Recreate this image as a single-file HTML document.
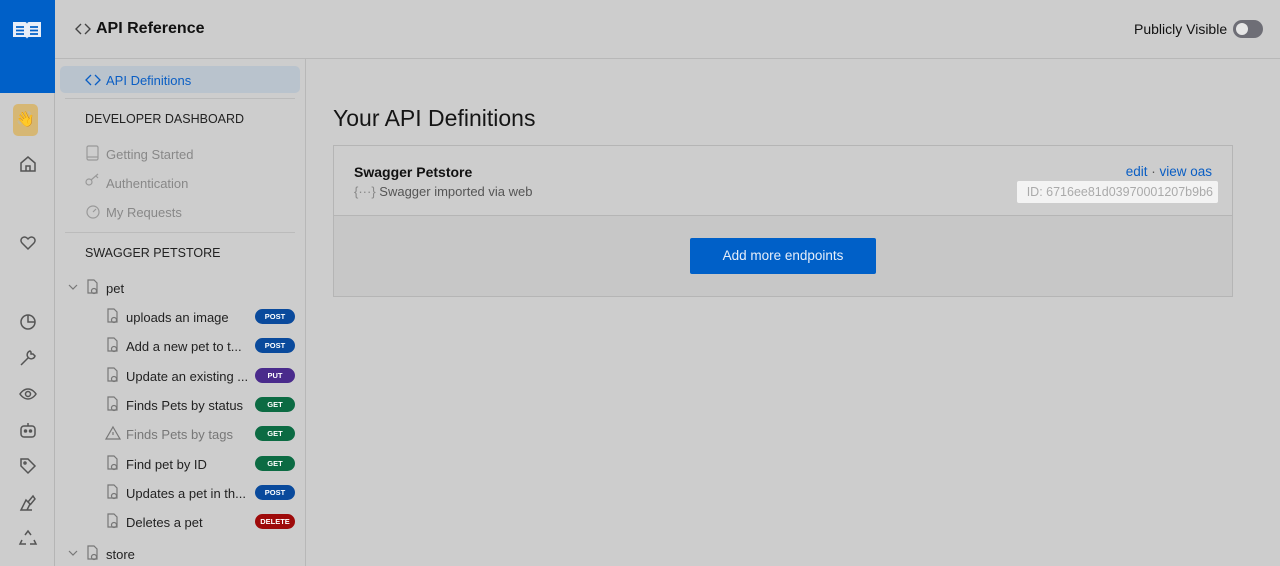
<!DOCTYPE html>
<html><head><meta charset="utf-8"><style>
*{box-sizing:border-box;margin:0;padding:0}
body{width:1280px;height:566px;overflow:hidden;background:#cdcdcd;font-family:"Liberation Sans",sans-serif;color:#1a1a1a;position:relative}
.abs{position:absolute}
.rail{left:0;top:0;width:55px;height:566px;border-right:1px solid #b5b5b5;background:#cdcdcd}
.blue{left:0;top:0;width:55px;height:93px;background:#0060c8}
.hdr{left:55px;top:0;width:1225px;height:59px;border-bottom:1px solid #b8b8b8}
.side{left:55px;top:59px;width:251px;height:507px;border-right:1px solid #b8b8b8}
.sec{position:absolute;left:30px;font-size:12.5px;color:#222}
.item{position:absolute;left:51px;font-size:13px;color:#888}
.ep{position:absolute;left:71px;font-size:13px;color:#222;white-space:nowrap}
.badge{position:absolute;left:200px;width:40px;height:15px;border-radius:8px;color:#fff;font-size:7.5px;font-weight:bold;text-align:center;line-height:15px}
.post{background:#0a4a9c}.put{background:#4a2b8c}.get{background:#0c6b43}.del{background:#9e0a0a}
</style></head><body>
<div class="abs rail"></div>
<div class="abs blue"></div>
<svg class="abs" style="left:12px;top:20px" width="30" height="22" viewBox="0 0 30 22"><path d="M1 2h12c1 0 2 1 2 2 0-1 1-2 2-2h12v15H17c-1 0-2 1-2 2 0-1-1-2-2-2H1z" fill="#e8eef8"/><g stroke="#0060c8" stroke-width="1.8"><path d="M4 7h8M4 10.5h8M4 14h8M18 7h8M18 10.5h8M18 14h8"/></g></svg>
<div class="abs" style="left:13px;top:104px;width:25px;height:32px;background:#d6b774;border-radius:5px;text-align:center;line-height:32px;font-size:15px">👋</div>
<svg class="abs" style="left:18px;top:154px" width="20" height="20" viewBox="0 0 20 20" fill="none" stroke="#555" stroke-width="1.5"><path d="M3 9l7-6 7 6v8H3z M8 17v-5h4v5"/></svg>
<svg class="abs" style="left:18px;top:233px" width="20" height="20" viewBox="0 0 20 20" fill="none" stroke="#555" stroke-width="1.5"><path d="M10 16l-6-6a3.5 3.5 0 015-5l1 1 1-1a3.5 3.5 0 015 5z"/></svg>
<svg class="abs" style="left:18px;top:312px" width="20" height="20" viewBox="0 0 20 20" fill="none" stroke="#555" stroke-width="1.5"><circle cx="10" cy="10" r="7"/><path d="M10 3v7h7"/></svg>
<svg class="abs" style="left:18px;top:348px" width="20" height="20" viewBox="0 0 20 20" fill="none" stroke="#555" stroke-width="1.5"><path d="M3 17l7-7M12 3a4 4 0 105 5l-2-2-2 0 0-2z"/></svg>
<svg class="abs" style="left:18px;top:384px" width="20" height="20" viewBox="0 0 20 20" fill="none" stroke="#555" stroke-width="1.5"><path d="M2 10s3-5 8-5 8 5 8 5-3 5-8 5-8-5-8-5z"/><circle cx="10" cy="10" r="2.5"/></svg>
<svg class="abs" style="left:18px;top:421px" width="20" height="20" viewBox="0 0 20 20" fill="none" stroke="#555" stroke-width="1.5"><rect x="3" y="5" width="14" height="11" rx="3"/><path d="M10 2v3"/><circle cx="7.5" cy="10" r="1" fill="#555"/><circle cx="12.5" cy="10" r="1" fill="#555"/></svg>
<svg class="abs" style="left:18px;top:456px" width="20" height="20" viewBox="0 0 20 20" fill="none" stroke="#555" stroke-width="1.5"><path d="M3 3h7l7 7-7 7-7-7z"/><circle cx="7" cy="7" r="1"/></svg>
<svg class="abs" style="left:18px;top:493px" width="20" height="20" viewBox="0 0 20 20" fill="none" stroke="#555" stroke-width="1.5"><path d="M3 17l5-10 4 4-3 6zM10 9l5-6 2 3-5 6M6 17h8"/></svg>
<svg class="abs" style="left:18px;top:528px" width="20" height="20" viewBox="0 0 20 20" fill="none" stroke="#555" stroke-width="1.5"><path d="M7 7l3-4 3 4M4 12l-2 4h6M16 12l2 4h-6"/></svg>

<div class="abs hdr"></div>
<svg class="abs" style="left:75px;top:22px" width="16" height="14" viewBox="0 0 16 14" fill="none" stroke="#444" stroke-width="1.4"><path d="M6 2L1 7l5 5M10 2l5 5-5 5"/></svg>
<div class="abs" style="left:96px;top:20px;font-size:16px;font-weight:bold;color:#111">API Reference</div>
<div class="abs" style="left:1134px;top:21px;font-size:14px;color:#111">Publicly Visible</div>
<div class="abs" style="left:1233px;top:20px;width:30px;height:18px;border-radius:9px;background:#6e6e76"><div style="position:absolute;left:3px;top:3px;width:12px;height:12px;border-radius:6px;background:#e6e6e6"></div></div>

<div class="abs side">
<div style="position:absolute;left:5px;top:7px;width:240px;height:27px;background:#b9c3cd;border-radius:5px"></div>
<svg style="position:absolute;left:30px;top:15px" width="16" height="12" viewBox="0 0 16 12" fill="none" stroke="#0a5ec4" stroke-width="1.3"><path d="M6 1L1 6l5 5M10 1l5 5-5 5"/></svg>
<div style="position:absolute;left:51px;top:14px;font-size:13px;color:#0a5ec4">API Definitions</div>
<div style="position:absolute;left:10px;top:39px;width:230px;height:1px;background:#bbb"></div>
<div class="sec" style="top:53px">DEVELOPER DASHBOARD</div>
<div class="item" style="top:88px">Getting Started</div>
<div class="item" style="top:117px">Authentication</div>
<div class="item" style="top:146px">My Requests</div>
<svg style="position:absolute;left:30px;top:86px" width="16" height="76" viewBox="0 0 16 76" fill="none" stroke="#999" stroke-width="1.2"><rect x="2" y="1" width="11" height="14" rx="1.5"/><path d="M2 12h11"/><circle cx="4" cy="37" r="3"/><path d="M6 35l7-6M11 31l2 2"/><circle cx="8" cy="67" r="6"/><path d="M8 67l3-3"/></svg>
<div style="position:absolute;left:10px;top:173px;width:230px;height:1px;background:#bbb"></div>
<div class="sec" style="top:187px">SWAGGER PETSTORE</div>
<div class="ep" style="left:51px;top:222px">pet</div>
<div class="ep" style="top:251px">uploads an image</div><div class="badge post" style="top:250px">POST</div>
<div class="ep" style="top:280px">Add a new pet to t...</div><div class="badge post" style="top:279px">POST</div>
<div class="ep" style="top:310px">Update an existing ...</div><div class="badge put" style="top:309px">PUT</div>
<div class="ep" style="top:339px">Finds Pets by status</div><div class="badge get" style="top:338px">GET</div>
<div class="ep" style="top:368px;color:#777">Finds Pets by tags</div><div class="badge get" style="top:367px">GET</div>
<div class="ep" style="top:398px">Find pet by ID</div><div class="badge get" style="top:397px">GET</div>
<div class="ep" style="top:427px">Updates a pet in th...</div><div class="badge post" style="top:426px">POST</div>
<div class="ep" style="top:456px">Deletes a pet</div><div class="badge del" style="top:455px">DELETE</div>
<div class="ep" style="left:51px;top:488px">store</div>
<svg style="position:absolute;left:0;top:0" width="250" height="507" fill="none" stroke="#777" stroke-width="1.2">
<path d="M14 226l4 4 4-4M14 492l4 4 4-4"/>
<path d="M33 221h6l3 3v10h-9z"/><circle cx="39" cy="232" r="2.5"/>
<path d="M33 487h6l3 3v10h-9z"/><circle cx="39" cy="498" r="2.5"/>
<g id="dd">
<path d="M53 250h6l3 3v10h-9z"/><circle cx="59" cy="261" r="2.5"/>
<path d="M53 279h6l3 3v10h-9z"/><circle cx="59" cy="290" r="2.5"/>
<path d="M53 309h6l3 3v10h-9z"/><circle cx="59" cy="320" r="2.5"/>
<path d="M53 338h6l3 3v10h-9z"/><circle cx="59" cy="349" r="2.5"/>
<path d="M53 397h6l3 3v10h-9z"/><circle cx="59" cy="408" r="2.5"/>
<path d="M53 426h6l3 3v10h-9z"/><circle cx="59" cy="437" r="2.5"/>
<path d="M53 455h6l3 3v10h-9z"/><circle cx="59" cy="466" r="2.5"/>
</g>
<path d="M58 368l7 12H51z M58 373v3"/>
</svg>
</div>

<div class="abs" style="left:333px;top:105px;font-size:23px;color:#151515">Your API Definitions</div>
<div class="abs" style="left:333px;top:145px;width:900px;height:152px;border:1px solid #b5b5b5;background:#c7c7c7">
<div style="height:70px;background:#cdcdcd;border-bottom:1px solid #b5b5b5"></div>
</div>
<div class="abs" style="left:354px;top:164px;font-size:14px;font-weight:bold;color:#111">Swagger Petstore</div>
<div class="abs" style="left:354px;top:184px;font-size:13px;color:#555"><span style="color:#888">{···}</span> Swagger imported via web</div>
<div class="abs" style="right:68px;top:164px;font-size:13.5px;color:#0a5ec4">edit <span style="color:#555">·</span> view oas</div>
<div class="abs" style="left:1017px;top:181px;width:201px;height:22px;background:#f3f3f3;border-radius:2px;font-size:12.5px;color:#aaa;line-height:22px;text-align:right;padding-right:5px;white-space:nowrap">ID: 6716ee81d03970001207b9b6</div>
<div class="abs" style="left:690px;top:238px;width:186px;height:36px;background:#0060c8;border-radius:2px;color:#e6eefa;font-size:13.5px;text-align:center;line-height:36px">Add more endpoints</div>
</body></html>
